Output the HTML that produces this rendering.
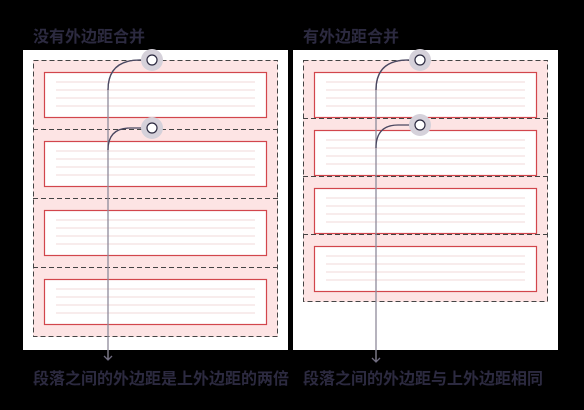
<!DOCTYPE html>
<html><head><meta charset="utf-8"><style>
html,body{margin:0;padding:0;background:#000;width:584px;height:410px;overflow:hidden}
svg{display:block}
text{font-family:"Liberation Sans","Noto Sans CJK SC",sans-serif;font-weight:bold;fill:#2c2a40}
</style></head><body>
<svg width="584" height="410" viewBox="0 0 584 410">
<text x="33" y="42" font-size="16">没有外边距合并</text>
<text x="303" y="42" font-size="16">有外边距合并</text>
<rect x="23" y="50" width="265" height="300" fill="#fff"/>
<rect x="293" y="50" width="265" height="300" fill="#fff"/>
<g>
<rect x="33" y="60" width="245" height="277" fill="#fde4e4"/>
<g fill="#fff" stroke="#d2464c" stroke-width="1.2">
<rect x="44.5" y="72.5" width="222" height="45"/>
<rect x="44.5" y="141.5" width="222" height="45"/>
<rect x="44.5" y="210.5" width="222" height="45"/>
<rect x="44.5" y="279.5" width="222" height="45"/>
</g>
<g stroke="#f6e6e6" stroke-width="1.5">
<path d="M56 82H255M56 90H255M56 98H255M56 106H255"/>
<path d="M56 151H255M56 159H255M56 167H255M56 175H255"/>
<path d="M56 220H255M56 228H255M56 236H255M56 244H255"/>
<path d="M56 289H255M56 297H255M56 305H255M56 313H255"/>
</g>
<g fill="none" stroke="#444" stroke-dasharray="5,3" stroke-width="1">
<rect x="33.5" y="60.5" width="244" height="276"/>
<path d="M33 129.5H278M33 198.5H278M33 267.5H278"/>
</g>
</g>
<g>
<rect x="303" y="60" width="245" height="242" fill="#fde4e4"/>
<g fill="#fff" stroke="#d2464c" stroke-width="1.2">
<rect x="314.5" y="72.5" width="222" height="45"/>
<rect x="314.5" y="130.5" width="222" height="45"/>
<rect x="314.5" y="188.5" width="222" height="45"/>
<rect x="314.5" y="246.5" width="222" height="45"/>
</g>
<g stroke="#f6e6e6" stroke-width="1.5">
<path d="M326 82H525M326 90H525M326 98H525M326 106H525"/>
<path d="M326 140H525M326 148H525M326 156H525M326 164H525"/>
<path d="M326 198H525M326 206H525M326 214H525M326 222H525"/>
<path d="M326 256H525M326 264H525M326 272H525M326 280H525"/>
</g>
<g fill="none" stroke="#444" stroke-dasharray="5,3" stroke-width="1">
<rect x="303.5" y="60.5" width="244" height="241"/>
<path d="M303 118.5H548M303 176.5H548M303 234.5H548"/>
</g>
</g>
<g fill="none" stroke-width="1.3">
<path d="M108 360V90Q108 60 140 60H152" stroke="#8e8a9a"/>
<path d="M108 150Q108 128 130 128H152" stroke="#4a4760"/>
<path d="M108 90Q108 60 140 60H152" stroke="#4a4760"/>
<path d="M104 356L108 360L112 356" stroke="#6e6a7e"/>
<path d="M376 362V90Q376 60 408 60H420" stroke="#8e8a9a"/>
<path d="M376 90Q376 60 408 60H420" stroke="#4a4760"/>
<path d="M376 148Q376 125 398 125H420" stroke="#4a4760"/>
<path d="M372 358L376 362L380 358" stroke="#6e6a7e"/>
</g>
<g>
<circle cx="152" cy="60" r="11" fill="#d5d1da"/><circle cx="152" cy="60" r="5" fill="#fff" stroke="#2c2a40" stroke-width="1.2"/>
<circle cx="152" cy="128" r="11" fill="#d5d1da"/><circle cx="152" cy="128" r="5" fill="#fff" stroke="#2c2a40" stroke-width="1.2"/>
<circle cx="420" cy="60" r="11" fill="#d5d1da"/><circle cx="420" cy="60" r="5" fill="#fff" stroke="#2c2a40" stroke-width="1.2"/>
<circle cx="420" cy="125" r="11" fill="#d5d1da"/><circle cx="420" cy="125" r="5" fill="#fff" stroke="#2c2a40" stroke-width="1.2"/>
</g>
<text x="33" y="384" font-size="16">段落之间的外边距是上外边距的两倍</text>
<text x="303" y="384" font-size="16">段落之间的外边距与上外边距相同</text>
</svg>
</body></html>
